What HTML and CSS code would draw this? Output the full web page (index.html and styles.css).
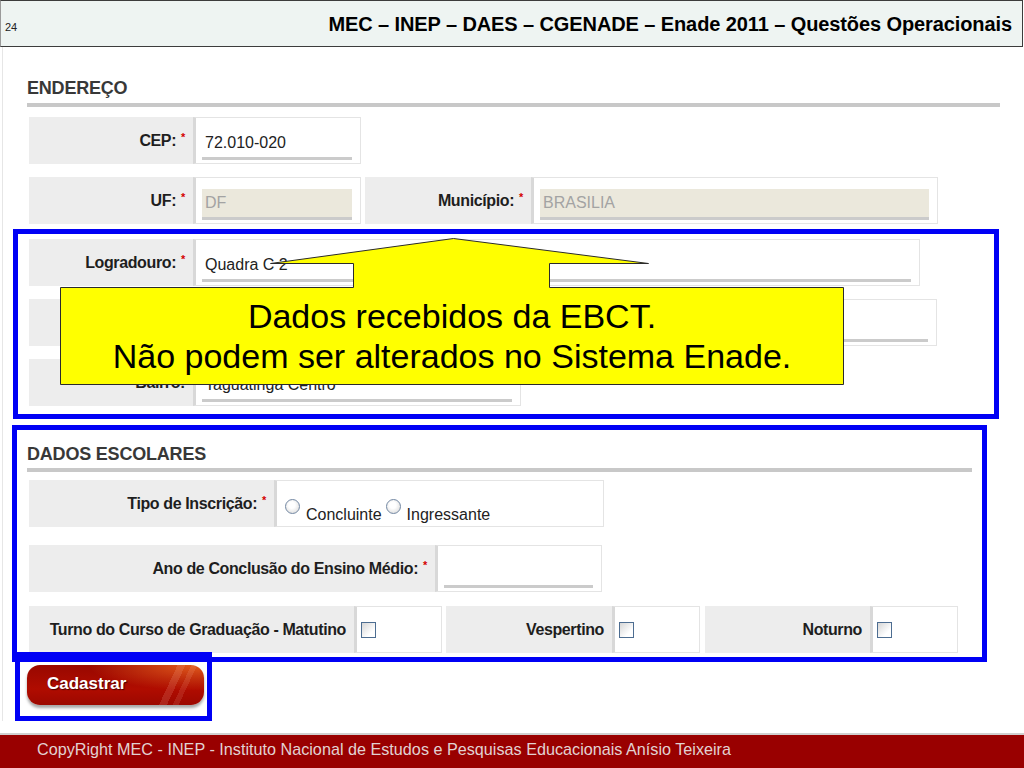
FILE: index.html
```html
<!DOCTYPE html>
<html lang="pt-BR">
<head>
  <meta charset="UTF-8">
  <title>Enade 2011 - Questões Operacionais</title>
  <link rel="stylesheet" href="styles.css">
</head>
<body>
  <div class="slide">
    <!-- Cabeçalho do slide -->
    <header class="slide-head">
      <span class="page-no">24</span>
      <h1 class="slide-title">MEC – INEP – DAES – CGENADE – Enade 2011 – Questões Operacionais</h1>
    </header>

    <div class="form-area">
      <h2 class="sec-title">ENDEREÇO</h2>

      <div class="frow">
        <div class="flabel lbl-a">CEP:<span class="req">*</span></div>
        <div class="fcell cell-a"><div class="finput">72.010-020</div></div>
      </div>

      <div class="frow">
        <div class="flabel lbl-a">UF:<span class="req">*</span></div>
        <div class="fcell cell-a"><div class="finput disabled">DF</div></div>
        <div class="flabel lbl-b">Município:<span class="req">*</span></div>
        <div class="fcell cell-b"><div class="finput disabled">BRASILIA</div></div>
      </div>

      <!-- Dados vindos da EBCT -->
      <div class="mark mark-ebct">
        <div class="frow">
          <div class="flabel lbl-a">Logradouro:<span class="req">*</span></div>
          <div class="fcell cell-c"><div class="finput">Quadra C 2</div></div>
        </div>
        <div class="frow">
          <div class="flabel lbl-a">Complemento:</div>
          <div class="fcell cell-d"><div class="finput"></div></div>
        </div>
        <div class="frow">
          <div class="flabel lbl-a">Bairro:</div>
          <div class="fcell cell-e"><div class="finput">Taguatinga Centro</div></div>
        </div>
      </div>

      <!-- Dados escolares -->
      <div class="mark mark-school">
        <h2 class="sec-title">DADOS ESCOLARES</h2>

        <div class="frow">
          <div class="flabel lbl-tipo">Tipo de Inscrição:<span class="req">*</span></div>
          <div class="fcell cell-tipo opts">
            <span class="radio"></span><span class="opt-text">Concluinte</span>
            <span class="radio"></span><span class="opt-text">Ingressante</span>
          </div>
        </div>

        <div class="frow row-ano">
          <div class="flabel lbl-ano">Ano de Conclusão do Ensino Médio:<span class="req">*</span></div>
          <div class="fcell cell-ano"><div class="finput"></div></div>
        </div>

        <div class="frow row-turno">
          <div class="flabel lbl-turno">Turno do Curso de Graduação - Matutino</div>
          <div class="fcell chk"><span class="checkbox"></span></div>
          <div class="flabel lbl-t2">Vespertino</div>
          <div class="fcell chk"><span class="checkbox"></span></div>
          <div class="flabel lbl-t3">Noturno</div>
          <div class="fcell chk"><span class="checkbox"></span></div>
        </div>
      </div>

      <div class="mark mark-btn">
        <button class="btn-cadastrar">Cadastrar</button>
      </div>
    </div>

    <!-- Balão amarelo -->
    <div class="callout">
      <svg class="callout-shape" width="785" height="148" viewBox="0 0 785 148">
        <path d="M0.5,49.5 H293.5 V25.5 H210.5 L393.5,0.5 L588.5,25.5 H489.5 V49.5 H783.5 V146.5 H0.5 Z" fill="#ffff00" stroke="#2b2b2b" stroke-width="1"/>
      </svg>
      <p class="callout-text">Dados recebidos da EBCT.<br>Não podem ser alterados no Sistema Enade.</p>
    </div>

    <footer class="slide-foot">CopyRight MEC - INEP - Instituto Nacional de Estudos e Pesquisas Educacionais Anísio Teixeira</footer>
  </div>
</body>
</html>
```

FILE: styles.css
```css
/* Base */
* {
  box-sizing: border-box;
}

body {
  margin: 0;
  font-family: "Liberation Sans", Arial, sans-serif;
  background: #fff;
  color: #222;
}

.slide {
  width: 1024px;
  height: 768px;
  position: relative;
  display: flex;
  flex-direction: column;
  overflow: hidden;
}

/* Cabeçalho */
.slide-head {
  flex-shrink: 0;
  width: 1023px;
  height: 47px;
  display: flex;
  align-items: baseline;
  padding: 12px 10px 0 4px;
  background: #eef4f2;
  border: 1px solid #3c3c3c;
  border-left-color: #9a9a9a;
}

.page-no {
  font-size: 11px;
}

.slide-title {
  margin: 0 0 0 auto;
  font-size: 20px;
  line-height: 22px;
  letter-spacing: -0.1px;
  font-weight: bold;
  color: #000;
}

/* Formulário */
.form-area {
  border-left: 1px solid #e6e6e6;
  margin-left: 2px;
  margin-right: 0;
}

.sec-title {
  margin: 30px 24px 0 24px;
  padding-bottom: 4px;
  border-bottom: 4px solid #c8c8c8;
  font-size: 18px;
  line-height: 22px;
  letter-spacing: -0.2px;
  color: #383838;
}

.frow {
  display: flex;
  height: 47px;
  margin: 13px 0 0 26px;
}

.sec-title + .frow {
  margin-top: 10px;
}

.flabel {
  display: flex;
  align-items: center;
  justify-content: flex-end;
  padding-right: 8px;
  background: #ededed;
  font-size: 16px;
  font-weight: bold;
  letter-spacing: -0.38px;
  color: #1e1e1e;
  white-space: nowrap;
}

.req {
  position: relative;
  top: -4px;
  margin-left: 5px;
  font-size: 11px;
  color: #d40000;
}

.fcell {
  display: flex;
  align-items: flex-end;
  padding: 0 8px 3px 6px;
  background: #fff;
  border: 1px solid #e4e4e4;
  border-left: 3px solid #d8d8d8;
}

.finput {
  flex: 1;
  height: 31px;
  padding-left: 3px;
  border-bottom: 3px solid #cbcbcb;
  font-size: 16px;
  line-height: 28px;
  color: #222;
}

.finput.disabled {
  background: #ebe8dc;
  color: #a3a3a3;
}

.lbl-a { width: 164px; }
.cell-a { width: 168px; }
.lbl-b { width: 166px; margin-left: 4px; }
.cell-b { width: 407px; }
.cell-c { width: 727px; }
.cell-d { width: 744px; }
.cell-e { width: 328px; }
.lbl-tipo { width: 245px; }
.cell-tipo { width: 330px; }
.lbl-ano { width: 406px; }
.cell-ano { width: 167px; }
.lbl-turno { width: 325px; }
.lbl-t2 { width: 166px; margin-left: 4px; }
.lbl-t3 { width: 165px; margin-left: 5px; }

/* Opções */
.opts {
  padding: 0 0 2px 8px;
}

.radio {
  width: 15px;
  height: 15px;
  margin: 0 6px 10px 0;
  border: 1px solid #7388a3;
  border-radius: 50%;
  background: radial-gradient(circle at 45% 40%, #fff 30%, #d2d2d2 100%);
}

.opt-text {
  margin-right: 4px;
  font-size: 16px;
  line-height: 18px;
}

.chk {
  width: 88px;
  align-items: center;
  padding: 0 0 0 4px;
}

.checkbox {
  width: 15px;
  height: 16px;
  border: 1px solid #4d6d91;
  background: linear-gradient(135deg, #d6d6d6, #fff 70%);
}

/* Marcações azuis */
.mark {
  border: 5px solid #0000f5;
}

.mark .frow {
  margin-left: 0;
}

.mark-ebct {
  width: 986px;
  margin: 5px 0 0 10px;
  padding: 5px 0 8px 11px;
}

.mark-ebct .frow:first-child {
  margin-top: 0;
}

.mark-school {
  width: 975px;
  margin: 6px 0 0 9px;
  padding: 0 0 4px 12px;
}

.mark-school .sec-title {
  margin: 13px 10px 0 -2px;
  padding-bottom: 3px;
}

.mark-school .sec-title + .frow {
  margin-top: 8px;
}

.row-ano {
  margin-top: 18px;
}

.row-turno {
  margin-top: 14px;
}

.mark-btn {
  position: relative;
  width: 197px;
  height: 69px;
  margin: -10px 0 0 12px;
  padding: 8px 0 0 7px;
}

.btn-cadastrar {
  width: 177px;
  height: 40px;
  padding: 0 0 2px 20px;
  border: 0;
  border-radius: 13px;
  text-align: left;
  font-family: "Liberation Sans", sans-serif;
  font-size: 17px;
  font-weight: bold;
  color: #fff;
  text-shadow: 1px 1px 1px #4a0000;
  background:
    linear-gradient(115deg, transparent 77%, rgba(255, 190, 170, 0.16) 77%, rgba(255, 190, 170, 0.16) 81%, transparent 81%, transparent 84%, rgba(255, 190, 170, 0.13) 84%, rgba(255, 190, 170, 0.13) 87%, transparent 87%),
    radial-gradient(ellipse at 96% 0%, #e35a1c 0%, rgba(227, 90, 28, 0) 45%),
    linear-gradient(#980800, #b00c00 60%, #9c0800);
  box-shadow: 0 3px 3px rgba(0, 0, 0, 0.35);
}

/* Balão */
.callout {
  position: absolute;
  left: 60px;
  top: 238px;
  width: 785px;
  height: 148px;
}

.callout-shape {
  position: absolute;
  left: 0;
  top: 0;
}

.callout-text {
  position: absolute;
  left: 0;
  top: 58px;
  width: 784px;
  margin: 0;
  text-align: center;
  font-size: 34px;
  line-height: 40px;
  color: #000;
}

/* Rodapé */
.slide-foot {
  margin-top: auto;
  height: 35px;
  padding-left: 37px;
  background: #990000;
  border-top: 2px solid #d0d0d0;
  font-size: 16.2px;
  line-height: 29px;
  color: #e2d2d2;
}
```
